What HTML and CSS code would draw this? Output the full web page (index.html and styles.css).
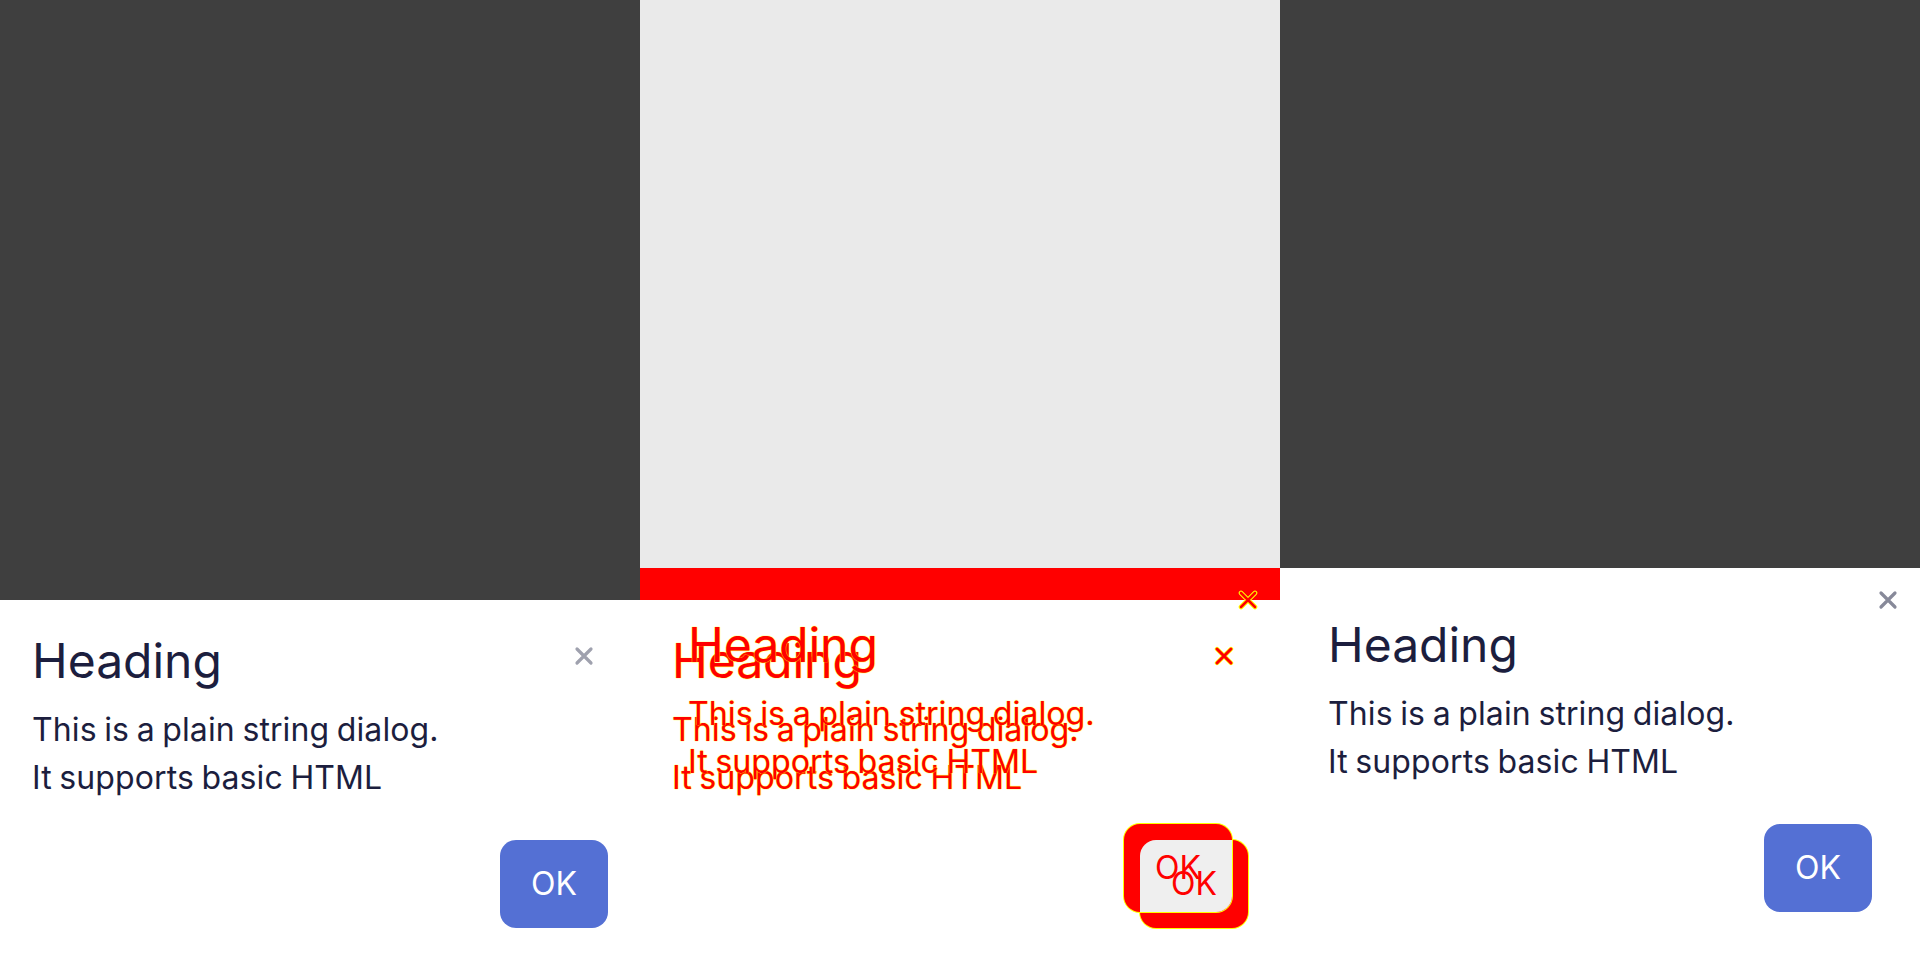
FILE: index.html
```html
<!DOCTYPE html>
<html lang="en">
<head>
<meta charset="utf-8">
<title>Dialog diff</title>
<link rel="stylesheet" href="styles.css">
</head>
<body>
<div class="panels">
  <section class="panel dark">
    <div class="dialog v1">
      <div class="dlg-head">
        <h2 class="dlg-title">Heading</h2>
        <button class="close c-light" aria-label="Close">
          <svg width="20" height="20" viewBox="0 0 20 20"><path d="M3 3L17 17M17 3L3 17" stroke="currentColor" stroke-width="3.2" stroke-linecap="round"/></svg>
        </button>
      </div>
      <p class="dlg-body">This is a plain string dialog.<br>It supports basic HTML</p>
      <div class="dlg-foot"><button class="ok"><span class="ok-label">OK</span></button></div>
    </div>
  </section>

  <section class="panel diff">
    <div class="diff-bg">
      <div class="bg-gray"></div>
      <div class="bg-red"></div>
      <div class="bg-white"></div>
    </div>
    <div class="dialog v1 ghost">
      <div class="dlg-head">
        <h2 class="dlg-title">Heading</h2>
        <button class="close" aria-label="Close">
          <svg width="20" height="20" viewBox="0 0 20 20"><path d="M3 3L17 17M17 3L3 17" stroke="#ffff00" stroke-width="4.4" stroke-linecap="round"/><path d="M3 3L17 17M17 3L3 17" stroke="#ff0000" stroke-width="3" stroke-linecap="round"/></svg>
        </button>
      </div>
      <p class="dlg-body">This is a plain string dialog.<br>It supports basic HTML</p>
      <div class="dlg-foot"><button class="ok"><span class="ok-label">OK</span></button></div>
    </div>
    <div class="dialog v2 ghost">
      <button class="close corner" aria-label="Close">
        <svg width="20" height="20" viewBox="0 0 20 20"><path d="M3 3L17 17M17 3L3 17" stroke="#ffff00" stroke-width="4.6" stroke-linecap="round"/><path d="M3 3L17 17M17 3L3 17" stroke="#ff0000" stroke-width="2.6" stroke-linecap="round"/></svg>
      </button>
      <div class="dlg-head">
        <h2 class="dlg-title">Heading</h2>
      </div>
      <p class="dlg-body">This is a plain string dialog.<br>It supports basic HTML</p>
      <div class="dlg-foot"><button class="ok"><span class="ok-label">OK</span></button></div>
    </div>
    <div class="overlap"></div>
  </section>

  <section class="panel dark">
    <div class="dialog v2">
      <button class="close corner c-dark" aria-label="Close">
        <svg width="20" height="20" viewBox="0 0 20 20"><path d="M3 3L17 17M17 3L3 17" stroke="currentColor" stroke-width="3.2" stroke-linecap="round"/></svg>
      </button>
      <div class="dlg-head">
        <h2 class="dlg-title">Heading</h2>
      </div>
      <p class="dlg-body">This is a plain string dialog.<br>It supports basic HTML</p>
      <div class="dlg-foot"><button class="ok"><span class="ok-label">OK</span></button></div>
    </div>
  </section>
</div>
</body>
</html>
```

FILE: styles.css
```css
* { box-sizing: border-box; }
html, body { margin: 0; padding: 0; }
body {
  width: 1920px;
  height: 960px;
  overflow: hidden;
  font-family: Inter, "Noto Sans", "Liberation Sans", sans-serif;
  color: #1c1e3e;
  background: #fff;
}
.panels {
  display: grid;
  grid-template-columns: 640px 640px 640px;
  height: 960px;
}
.panel {
  display: flex;
  flex-direction: column;
  justify-content: flex-end;
  height: 960px;
}
.panel.dark { background: #3f3f3f; }

.dialog {
  position: relative;
  background: #fff;
  display: flex;
  flex-direction: column;
}
.dialog.v1 { padding: 32px; }
.dialog.v2 { padding: 48px; }

.dlg-head {
  display: flex;
  align-items: flex-start;
  justify-content: space-between;
}
.dlg-title {
  margin: 0;
  font-size: 48px;
  line-height: 57.6px;
  font-weight: 400;
  letter-spacing: 0;
}
.close {
  width: 48px;
  height: 48px;
  padding: 0;
  border: 0;
  background: transparent;
  display: flex;
  align-items: center;
  justify-content: center;
  cursor: pointer;
}
.close svg { display: block; }
.c-light { color: #9fa1ae; }
.c-dark { color: #878999; }
.close.corner {
  position: absolute;
  top: 8px;
  right: 8px;
}

.dlg-body {
  margin: 16px 0 38.4px;
  font-size: 32px;
  line-height: 48px;
  letter-spacing: 0.1px;
  word-spacing: -1.5px;
}
.dlg-foot {
  display: flex;
  justify-content: flex-end;
}
.ok {
  position: relative;
  width: 108px;
  height: 88px;
  padding: 0;
  border: 0;
  border-radius: 16px;
  background: #5470d4;
  color: #fff;
  font-family: Inter, "Noto Sans", "Liberation Sans", sans-serif;
  font-size: 32px;
  line-height: 48px;
  display: flex;
  align-items: center;
  justify-content: center;
}

/* ---------- diff panel ---------- */
.panel.diff {
  position: relative;
  z-index: 0;
  background: #fff;
}
.diff-bg {
  display: flex;
  flex-direction: column;
  height: 960px;
}
.bg-gray { flex: 1; background: #eaeaea; }
.bg-red { height: 32px; background: #ff0000; }
.bg-white { height: 360px; background: #fff; }

.dialog.ghost {
  position: absolute;
  left: 0;
  right: 0;
  bottom: 0;
  background: transparent;
  color: #ff0000;
  text-shadow: 0 0 1px #ffff00, 0 0 1px #ffff00;
}
.ghost .ok {
  background: transparent;
  color: #ff0000;
}
.ghost .ok::before {
  content: "";
  position: absolute;
  inset: 0;
  border-radius: 16px;
  background: #ff0000;
  box-shadow: 0 0 0 1px #ffff00;
  z-index: 1;
}
.ghost .ok-label {
  position: relative;
  z-index: 3;
  font-size: 32px;
}
.ghost .close { position: relative; z-index: 3; }
.ghost .close.corner { position: absolute; }
.overlap {
  position: absolute;
  left: 500px;
  top: 840px;
  width: 92px;
  height: 72px;
  background: #efefef;
  border-radius: 16px 0 16px 0;
  z-index: 2;
}
```
